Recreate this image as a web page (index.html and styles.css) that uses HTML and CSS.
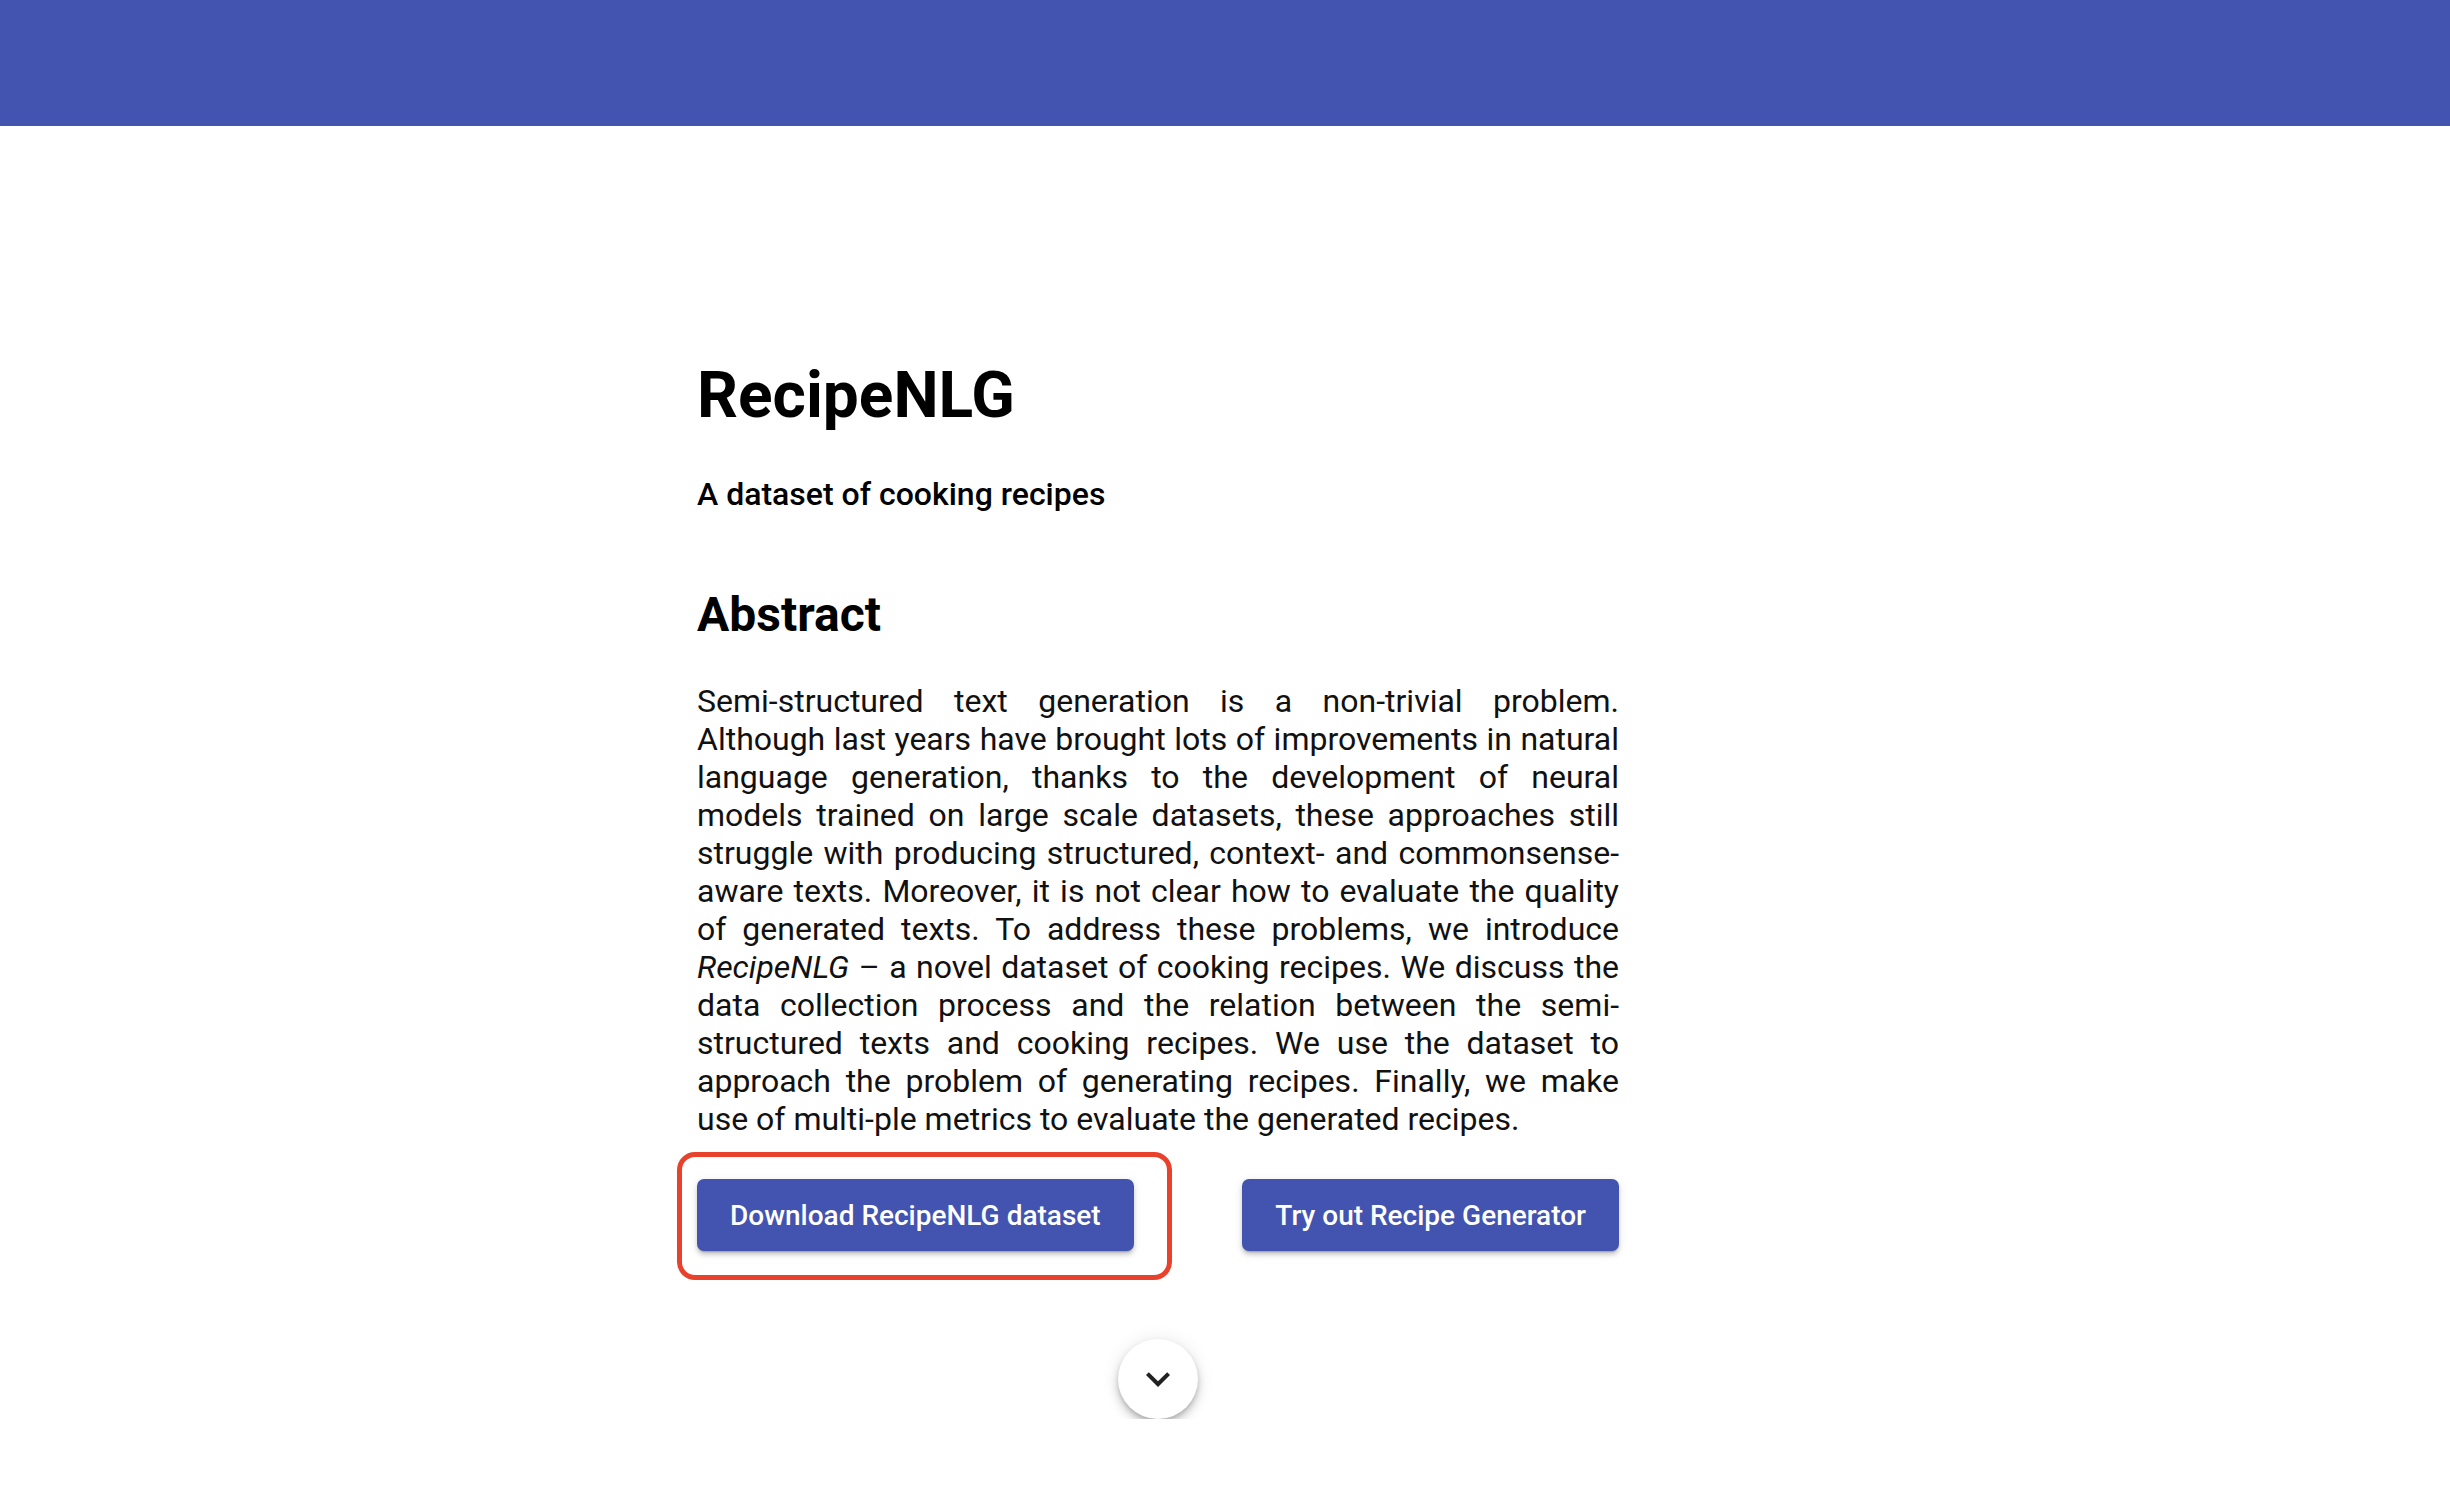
FILE: index.html
```html
<!DOCTYPE html>
<html lang="en">
<head>
<meta charset="utf-8">
<title>RecipeNLG</title>
<link rel="stylesheet" href="styles.css">
</head>
<body>
<header class="topbar"></header>
<main class="page">
  <section class="content">
    <h1 class="title">RecipeNLG</h1>
    <p class="subtitle">A dataset of cooking recipes</p>
    <h2 class="section-title">Abstract</h2>
    <p class="abstract">Semi-structured text generation is a non-trivial problem. Although last years have brought lots of improvements in natural language generation, thanks to the development of neural models trained on large scale datasets, these approaches still struggle with producing structured, context- and commonsense-aware texts. Moreover, it is not clear how to evaluate the quality of generated texts. To address these problems, we introduce <em>RecipeNLG</em> – a novel dataset of cooking recipes. We discuss the data collection process and the relation between the semi-structured texts and cooking recipes. We use the dataset to approach the problem of generating recipes. Finally, we make use of multi-ple metrics to evaluate the generated recipes.</p>
    <div class="actions">
      <div class="highlight-wrap">
        <a class="btn" href="#">Download RecipeNLG dataset</a>
        <span class="highlight"></span>
      </div>
      <a class="btn" href="#">Try out Recipe Generator</a>
    </div>
    <div class="scroll-row">
      <button class="fab" aria-label="Scroll down">
        <svg class="chev" viewBox="0 0 24 24" width="48" height="48"><path d="M16.59 8.59L12 13.17 7.41 8.59 6 10l6 6 6-6z"/></svg>
      </button>
    </div>
  </section>
</main>
</body>
</html>
```

FILE: styles.css
```css
html, body {
  margin: 0;
  padding: 0;
  background: #ffffff;
}
body {
  font-family: Roboto, "Liberation Sans", sans-serif;
  color: #000;
}
.topbar {
  height: 126px;
  background: #4253b0;
}
.page {
  display: flex;
  justify-content: center;
  padding-right: 134px;
}
.content {
  width: 922px;
  padding-top: 235px;
}
.title {
  margin: 0;
  font-size: 64px;
  line-height: 70px;
  font-weight: 700;
}
.subtitle {
  margin: 45px 0 0;
  font-size: 32px;
  line-height: 36px;
  font-weight: 500;
}
.section-title {
  margin: 75px 0 0;
  font-size: 48px;
  line-height: 56px;
  font-weight: 700;
}
.abstract {
  margin: 39px 0 0;
  font-size: 32px;
  line-height: 38px;
  text-align: justify;
  color: #111;
}
.actions {
  margin-top: 41px;
  display: flex;
  justify-content: space-between;
  align-items: flex-start;
}
.highlight-wrap {
  position: relative;
}
.btn {
  display: inline-flex;
  align-items: center;
  height: 72px;
  padding: 0 33px;
  box-sizing: border-box;
  background: #4253b0;
  color: #fff;
  text-decoration: none;
  font-size: 28px;
  font-weight: 500;
  border-radius: 7px;
  box-shadow: 0 3px 2px -2px rgba(0,0,0,0.25), 0 4px 4px 0 rgba(0,0,0,0.14), 0 2px 10px 0 rgba(0,0,0,0.10);
}
.highlight {
  position: absolute;
  left: -20px;
  top: -27px;
  width: 495px;
  height: 128px;
  box-sizing: border-box;
  border: 5px solid #e8412c;
  border-radius: 18px;
  pointer-events: none;
}
.scroll-row {
  display: flex;
  justify-content: center;
  margin-top: 88px;
}
.fab {
  width: 80px;
  height: 80px;
  border-radius: 50%;
  border: none;
  background: #fff;
  padding: 0;
  display: flex;
  align-items: center;
  justify-content: center;
  box-shadow: 0 6px 10px 0 rgba(0,0,0,0.16), 0 1px 18px 0 rgba(0,0,0,0.10), 0 3px 5px -1px rgba(0,0,0,0.18);
}
.chev {
  fill: #212121;
}
```
